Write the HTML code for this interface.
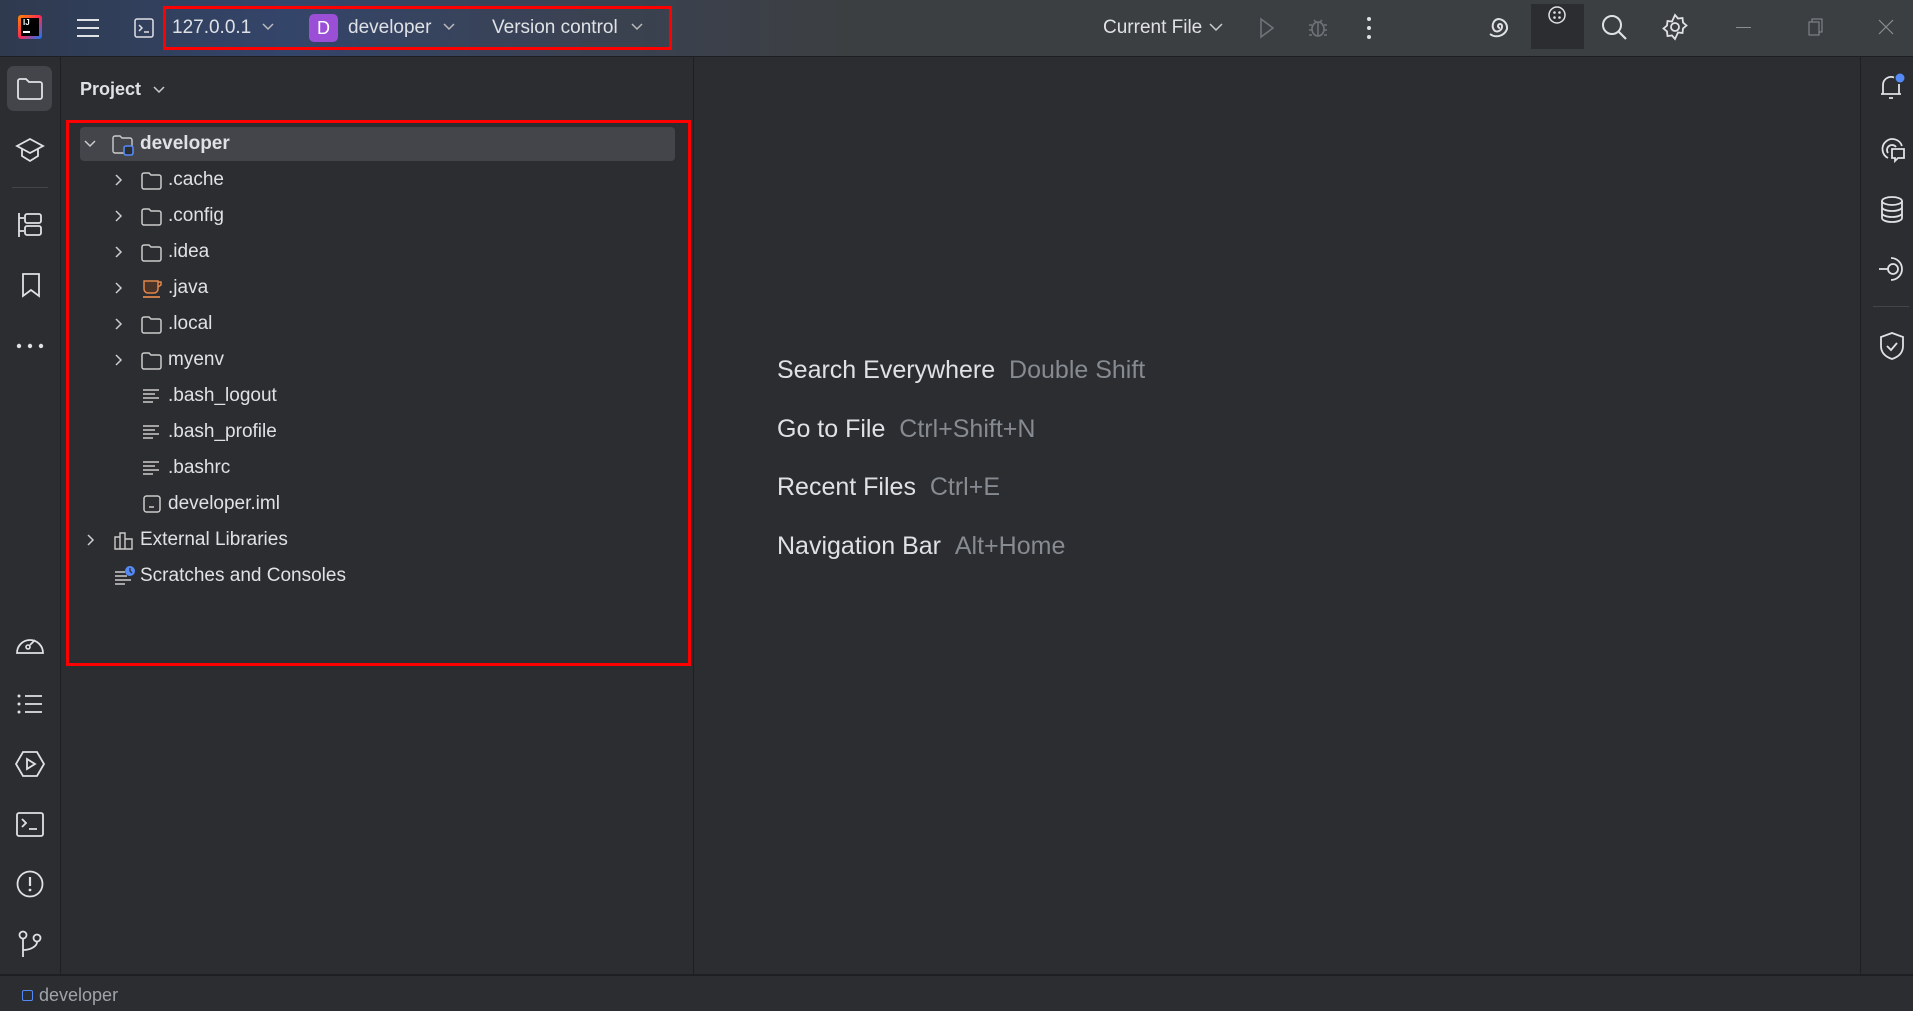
<!DOCTYPE html>
<html><head><meta charset="utf-8"><style>
*{margin:0;padding:0;box-sizing:border-box}
body{width:1913px;height:1011px;background:#2b2d30;font-family:"Liberation Sans",sans-serif;color:#dfe1e5;position:relative;overflow:hidden}
.a{position:absolute}
svg{position:absolute;overflow:visible}
.t{position:absolute;white-space:nowrap}
#title{left:0;top:0;width:1913px;height:57px;background:linear-gradient(90deg,#2f3a4f 0%,#34456a 15%,#3a4253 30%,#3c3f41 45%,#3c3f41 100%);border-bottom:1px solid #1e1f22}
.row{position:absolute;height:36px;line-height:36px;font-size:19px;color:#dfe1e5;white-space:nowrap}
.hint{color:#868a91}
</style></head><body>
<div id="title" class="a"></div>
<div class="a" style="left:18px;top:15px;width:24px;height:24px;background:linear-gradient(135deg,#ff8a00,#fe2857 50%,#087cfa);border-radius:3px"></div>
<div class="a" style="left:21px;top:18px;width:18px;height:18px;background:#000"></div>
<div class="t" style="left:23px;top:18px;font-size:8px;color:#fff;font-weight:bold">IJ</div>
<div class="a" style="left:23px;top:31px;width:7px;height:1.5px;background:#fff"></div>
<svg style="left:76px;top:17px" width="24" height="22"><path d="M1 3H23M1 11H23M1 19H23" stroke="#dfe1e5" stroke-width="2"/></svg>
<svg style="left:134px;top:18px" width="20" height="20"><rect x="1" y="1" width="18" height="18" rx="2" fill="none" stroke="#dfe1e5" stroke-width="1.5"/><path d="M5 7l3 3-3 3M10 14h5" stroke="#dfe1e5" stroke-width="1.5" fill="none"/></svg>
<div class="t" style="left:172px;top:17px;font-size:19px">127.0.0.1</div>
<svg style="left:262px;top:23px" width="12" height="8"><path d="M1 1l5 5 5-5" stroke="#bbb" stroke-width="1.5" fill="none"/></svg>
<div class="a" style="left:309px;top:14px;width:29px;height:28px;background:#9b4fd6;border-radius:5px;color:#fff;font-size:18px;text-align:center;line-height:28px">D</div>
<div class="t" style="left:348px;top:17px;font-size:19px">developer</div>
<svg style="left:443px;top:23px" width="12" height="8"><path d="M1 1l5 5 5-5" stroke="#bbb" stroke-width="1.5" fill="none"/></svg>
<div class="t" style="left:492px;top:17px;font-size:19px">Version control</div>
<svg style="left:631px;top:23px" width="12" height="8"><path d="M1 1l5 5 5-5" stroke="#bbb" stroke-width="1.5" fill="none"/></svg>
<div class="a" style="left:163px;top:6px;width:509px;height:44px;border:3px solid #f00"></div>

<div class="t" style="left:1103px;top:17px;font-size:19px">Current File</div>
<svg style="left:1209px;top:23px" width="14" height="8"><path d="M1 1l6 6 6-6" stroke="#ccc" stroke-width="1.5" fill="none"/></svg>
<svg style="left:1259px;top:17px" width="16" height="22"><path d="M2 2L14 11 2 20Z" stroke="#6f737a" stroke-width="1.6" fill="none"/></svg>
<svg style="left:1307px;top:15px" width="22" height="24"><ellipse cx="11" cy="14" rx="6" ry="7" stroke="#6f737a" stroke-width="1.6" fill="none"/><path d="M11 7v14M2 10h3M17 10h3M2 15h3M17 15h3M2 20h3M17 20h3M7 5l2 2M15 5l-2 2" stroke="#6f737a" stroke-width="1.5"/></svg>
<svg style="left:1366px;top:16px" width="6" height="24"><circle cx="3" cy="3" r="2" fill="#dfe1e5"/><circle cx="3" cy="12" r="2" fill="#dfe1e5"/><circle cx="3" cy="21" r="2" fill="#dfe1e5"/></svg>
<svg style="left:1487px;top:15px" width="26" height="26"><path d="M13 13a2 2 0 1 1 2-2a5 5 0 0 1-7 5a7 7 0 0 1 3-12a9 9 0 0 1 9 10a11 11 0 0 1-17 5" stroke="#dfe1e5" stroke-width="2" fill="none"/></svg>
<div class="a" style="left:1531px;top:4px;width:53px;height:45px;background:#2b2d30"></div>
<svg style="left:1545px;top:6px" width="24" height="24"><circle cx="12" cy="9" r="8" stroke="#dfe1e5" stroke-width="1.5" fill="none"/><circle cx="9.5" cy="6.5" r="1.3" fill="#dfe1e5"/><circle cx="14.5" cy="6.5" r="1.3" fill="#dfe1e5"/><circle cx="9.5" cy="11.5" r="1.3" fill="#dfe1e5"/><circle cx="14.5" cy="11.5" r="1.3" fill="#dfe1e5"/></svg>
<svg style="left:1601px;top:14px" width="28" height="28"><circle cx="11" cy="11" r="9" stroke="#dfe1e5" stroke-width="2" fill="none"/><path d="M17.5 17.5L25 25" stroke="#dfe1e5" stroke-width="2.2"/></svg>
<svg style="left:1662px;top:14px" width="26" height="26"><path d="M13 1l3 3.5 4.5-.5.5 4.5 3.5 3-3.5 3-.5 4.5-4.5-.5L13 25l-3-3.5-4.5.5-.5-4.5L1.5 14.5 5 11.5l.5-4.5 4.5.5Z" stroke="#dfe1e5" stroke-width="1.8" fill="none"/><circle cx="13" cy="13" r="4" stroke="#dfe1e5" stroke-width="1.8" fill="none"/></svg>
<div class="a" style="left:1736px;top:27px;width:15px;height:1px;background:#8a8d92"></div>
<svg style="left:1808px;top:18px" width="16" height="18"><rect x="1" y="4" width="10" height="13" stroke="#8a8d92" fill="none"/><path d="M4 4V1h10v13h-3" stroke="#8a8d92" fill="none"/></svg>
<svg style="left:1878px;top:19px" width="16" height="16"><path d="M1 1l14 14M15 1L1 15" stroke="#8a8d92" stroke-width="1.2"/></svg>

<div class="a" style="left:60px;top:57px;width:1px;height:917px;background:#1e1f22"></div>
<div class="a" style="left:7px;top:66px;width:45px;height:45px;background:#43454a;border-radius:7px"></div>
<svg style="left:17px;top:78px" width="26" height="22"><path d="M1 3a2 2 0 0 1 2-2h6l3 3h11a2 2 0 0 1 2 2v13a2 2 0 0 1-2 2H3a2 2 0 0 1-2-2Z" stroke="#dfe1e5" stroke-width="1.8" fill="none"/></svg>
<svg style="left:15px;top:137px" width="30" height="26"><path d="M15 2L28 9 15 16 2 9Z M7 12v7l8 5 8-5v-7" stroke="#dfe1e5" stroke-width="1.8" fill="none"/></svg>
<div class="a" style="left:12px;top:187px;width:36px;height:1px;background:#43454a"></div>
<svg style="left:17px;top:212px" width="26" height="26"><path d="M2 1v24M2 6h5M2 19h5" stroke="#dfe1e5" stroke-width="1.8"/><rect x="8" y="2" width="16" height="9" rx="2" stroke="#dfe1e5" stroke-width="1.8" fill="none"/><rect x="8" y="14" width="16" height="9" rx="2" stroke="#dfe1e5" stroke-width="1.8" fill="none"/></svg>
<svg style="left:21px;top:272px" width="20" height="26"><path d="M2 2h16v22l-8-6-8 6Z" stroke="#dfe1e5" stroke-width="1.8" fill="none"/></svg>
<svg style="left:16px;top:343px" width="28" height="6"><circle cx="3" cy="3" r="2.2" fill="#dfe1e5"/><circle cx="14" cy="3" r="2.2" fill="#dfe1e5"/><circle cx="25" cy="3" r="2.2" fill="#dfe1e5"/></svg>
<svg style="left:15px;top:632px" width="30" height="24"><path d="M2 21a13 13 0 1 1 26 0Z" stroke="#dfe1e5" stroke-width="1.8" fill="none"/><circle cx="13" cy="15" r="2" stroke="#dfe1e5" stroke-width="1.6" fill="none"/><path d="M15 13l5-5" stroke="#dfe1e5" stroke-width="1.8"/></svg>
<svg style="left:17px;top:693px" width="26" height="22"><path d="M8 3h17M8 11h17M8 19h17" stroke="#dfe1e5" stroke-width="1.8"/><circle cx="2" cy="3" r="1.5" fill="#dfe1e5"/><circle cx="2" cy="11" r="1.5" fill="#dfe1e5"/><circle cx="2" cy="19" r="1.5" fill="#dfe1e5"/></svg>
<svg style="left:15px;top:751px" width="30" height="26"><path d="M8 1h14l7 12-7 12H8L1 13Z" stroke="#dfe1e5" stroke-width="1.8" fill="none"/><path d="M12 8l8 5-8 5Z" stroke="#dfe1e5" stroke-width="1.8" fill="none"/></svg>
<svg style="left:16px;top:812px" width="28" height="25"><rect x="1" y="1" width="26" height="23" rx="2" stroke="#dfe1e5" stroke-width="1.8" fill="none"/><path d="M6 7l4 4-4 4M13 17h8" stroke="#dfe1e5" stroke-width="1.8" fill="none"/></svg>
<svg style="left:16px;top:870px" width="28" height="28"><circle cx="14" cy="14" r="12.5" stroke="#dfe1e5" stroke-width="1.8" fill="none"/><path d="M14 7v9" stroke="#dfe1e5" stroke-width="2.2"/><circle cx="14" cy="20" r="1.4" fill="#dfe1e5"/></svg>
<svg style="left:17px;top:930px" width="26" height="28"><circle cx="6" cy="5" r="3.5" stroke="#dfe1e5" stroke-width="1.8" fill="none"/><circle cx="20" cy="8" r="3.5" stroke="#dfe1e5" stroke-width="1.8" fill="none"/><path d="M6 9v18M6 20c8 0 14-4 14-8" stroke="#dfe1e5" stroke-width="1.8" fill="none"/></svg>

<div class="a" style="left:693px;top:57px;width:1px;height:917px;background:#1e1f22"></div>
<div class="t" style="left:80px;top:79px;font-size:18px;font-weight:bold">Project</div>
<svg style="left:153px;top:86px" width="12" height="8"><path d="M1 1l5 5 5-5" stroke="#ccc" stroke-width="1.5" fill="none"/></svg>
<div class="a" style="left:80px;top:127px;width:595px;height:34px;background:#43454a;border-radius:4px"></div>
<svg style="left:84px;top:140px" width="12" height="8"><path d="M1 1l5 5 5-5" stroke="#ccc" stroke-width="1.5" fill="none"/></svg>
<svg style="left:112px;top:135px" width="24" height="22"><path d="M1 3a2 2 0 0 1 2-2h5l2 2h8a2 2 0 0 1 2 2v11a2 2 0 0 1-2 2H3a2 2 0 0 1-2-2Z" stroke="#ccc" stroke-width="1.4" fill="none"/><rect x="12" y="11" width="9" height="9" rx="2" fill="#2b2d30" stroke="#548af7" stroke-width="1.6"/></svg>
<div class="row" style="left:140px;top:126px;font-weight:bold">developer</div>

<div class="a" style="left:0;top:162px">
<svg style="left:115px;top:12px" width="8" height="12"><path d="M1 1l5 5-5 5" stroke="#ccc" stroke-width="1.5" fill="none"/></svg>
<svg style="left:141px;top:10px" width="22" height="18"><path d="M1 3a2 2 0 0 1 2-2h5l2 2h8a2 2 0 0 1 2 2v10a2 2 0 0 1-2 2H3a2 2 0 0 1-2-2Z" stroke="#ccc" stroke-width="1.5" fill="none"/></svg>
<div class="row" style="left:168px;top:0">.cache</div>
</div>
<div class="a" style="left:0;top:198px">
<svg style="left:115px;top:12px" width="8" height="12"><path d="M1 1l5 5-5 5" stroke="#ccc" stroke-width="1.5" fill="none"/></svg>
<svg style="left:141px;top:10px" width="22" height="18"><path d="M1 3a2 2 0 0 1 2-2h5l2 2h8a2 2 0 0 1 2 2v10a2 2 0 0 1-2 2H3a2 2 0 0 1-2-2Z" stroke="#ccc" stroke-width="1.5" fill="none"/></svg>
<div class="row" style="left:168px;top:0">.config</div>
</div>
<div class="a" style="left:0;top:234px">
<svg style="left:115px;top:12px" width="8" height="12"><path d="M1 1l5 5-5 5" stroke="#ccc" stroke-width="1.5" fill="none"/></svg>
<svg style="left:141px;top:10px" width="22" height="18"><path d="M1 3a2 2 0 0 1 2-2h5l2 2h8a2 2 0 0 1 2 2v10a2 2 0 0 1-2 2H3a2 2 0 0 1-2-2Z" stroke="#ccc" stroke-width="1.5" fill="none"/></svg>
<div class="row" style="left:168px;top:0">.idea</div>
</div>
<div class="a" style="left:0;top:270px">
<svg style="left:115px;top:12px" width="8" height="12"><path d="M1 1l5 5-5 5" stroke="#ccc" stroke-width="1.5" fill="none"/></svg>
<svg style="left:142px;top:9px" width="22" height="20"><path d="M2 2h14v8a4 4 0 0 1-4 4H6a4 4 0 0 1-4-4Z" fill="#4a3328" stroke="#e0874b" stroke-width="1.5"/><path d="M16 3h3v3l-3 2" stroke="#e0874b" stroke-width="1.5" fill="none"/><path d="M1 18h17" stroke="#e0874b" stroke-width="1.8"/></svg>
<div class="row" style="left:168px;top:0">.java</div>
</div>
<div class="a" style="left:0;top:306px">
<svg style="left:115px;top:12px" width="8" height="12"><path d="M1 1l5 5-5 5" stroke="#ccc" stroke-width="1.5" fill="none"/></svg>
<svg style="left:141px;top:10px" width="22" height="18"><path d="M1 3a2 2 0 0 1 2-2h5l2 2h8a2 2 0 0 1 2 2v10a2 2 0 0 1-2 2H3a2 2 0 0 1-2-2Z" stroke="#ccc" stroke-width="1.5" fill="none"/></svg>
<div class="row" style="left:168px;top:0">.local</div>
</div>
<div class="a" style="left:0;top:342px">
<svg style="left:115px;top:12px" width="8" height="12"><path d="M1 1l5 5-5 5" stroke="#ccc" stroke-width="1.5" fill="none"/></svg>
<svg style="left:141px;top:10px" width="22" height="18"><path d="M1 3a2 2 0 0 1 2-2h5l2 2h8a2 2 0 0 1 2 2v10a2 2 0 0 1-2 2H3a2 2 0 0 1-2-2Z" stroke="#ccc" stroke-width="1.5" fill="none"/></svg>
<div class="row" style="left:168px;top:0">myenv</div>
</div>
<div class="a" style="left:0;top:378px">
<svg style="left:142px;top:11px" width="20" height="16"><path d="M1 1h16M1 5h12M1 9h16M1 13h10" stroke="#ccc" stroke-width="1.5"/></svg>
<div class="row" style="left:168px;top:0">.bash_logout</div>
</div>
<div class="a" style="left:0;top:414px">
<svg style="left:142px;top:11px" width="20" height="16"><path d="M1 1h16M1 5h12M1 9h16M1 13h10" stroke="#ccc" stroke-width="1.5"/></svg>
<div class="row" style="left:168px;top:0">.bash_profile</div>
</div>
<div class="a" style="left:0;top:450px">
<svg style="left:142px;top:11px" width="20" height="16"><path d="M1 1h16M1 5h12M1 9h16M1 13h10" stroke="#ccc" stroke-width="1.5"/></svg>
<div class="row" style="left:168px;top:0">.bashrc</div>
</div>
<div class="a" style="left:0;top:486px">
<svg style="left:143px;top:9px" width="18" height="18"><rect x="1" y="1" width="16" height="16" rx="2.5" stroke="#ccc" stroke-width="1.5" fill="none"/><path d="M6 12h5" stroke="#ccc" stroke-width="1.5"/></svg>
<div class="row" style="left:168px;top:0">developer.iml</div>
</div>
<div class="a" style="left:0;top:522px">
<svg style="left:87px;top:12px" width="8" height="12"><path d="M1 1l5 5-5 5" stroke="#ccc" stroke-width="1.5" fill="none"/></svg>
<svg style="left:114px;top:9px" width="20" height="19"><path d="M1 6h5v12H1ZM6 2h5v16H6ZM11 8h7v10h-7Z" stroke="#ccc" stroke-width="1.4" fill="none"/></svg>
<div class="row" style="left:140px;top:0">External Libraries</div>
</div>
<div class="a" style="left:0;top:558px">
<svg style="left:114px;top:8px" width="22" height="20"><path d="M1 6h10M1 10h12M1 14h16M1 18h10" stroke="#ccc" stroke-width="1.5"/><circle cx="16" cy="5" r="5" fill="#548af7"/><path d="M16 2v3l2 2" stroke="#2b2d30" stroke-width="1.3" fill="none"/></svg>
<div class="row" style="left:140px;top:0">Scratches and Consoles</div>
</div>
<div class="a" style="left:66px;top:120px;width:625px;height:546px;border:3px solid #f00"></div>

<div class="t" style="left:777px;top:356px;font-size:25px">Search Everywhere <span class="hint">&nbsp;Double Shift</span></div>
<div class="t" style="left:777px;top:415px;font-size:25px">Go to File <span class="hint">&nbsp;Ctrl+Shift+N</span></div>
<div class="t" style="left:777px;top:473px;font-size:25px">Recent Files <span class="hint">&nbsp;Ctrl+E</span></div>
<div class="t" style="left:777px;top:532px;font-size:25px">Navigation Bar <span class="hint">&nbsp;Alt+Home</span></div>

<div class="a" style="left:1860px;top:57px;width:1px;height:917px;background:#1e1f22"></div>
<svg style="left:1879px;top:73px" width="28" height="30"><path d="M4 21V12a8 8 0 0 1 11-7.5M20 11v10M2 21h20M10 25h4" stroke="#dfe1e5" stroke-width="1.8" fill="none"/><circle cx="21" cy="5" r="4.5" fill="#548af7"/></svg>
<svg style="left:1878px;top:136px" width="28" height="28"><path d="M10 22a10 10 0 1 1 14-12M10 17a5 5 0 1 1 8-6" stroke="#dfe1e5" stroke-width="1.8" fill="none"/><path d="M14 13h12v9h-6l-3 3v-3h-3Z" stroke="#dfe1e5" stroke-width="1.8" fill="#2b2d30"/></svg>
<svg style="left:1880px;top:196px" width="24" height="28"><ellipse cx="12" cy="5" rx="10" ry="4" stroke="#dfe1e5" stroke-width="1.8" fill="none"/><path d="M2 5v17c0 2 4 4 10 4s10-2 10-4V5M2 11c0 2 4 4 10 4s10-2 10-4M2 17c0 2 4 4 10 4s10-2 10-4" stroke="#dfe1e5" stroke-width="1.8" fill="none"/></svg>
<svg style="left:1878px;top:255px" width="28" height="28"><path d="M13 3a11 11 0 1 1 0 22" stroke="#dfe1e5" stroke-width="1.8" fill="none"/><circle cx="15" cy="14" r="5" stroke="#dfe1e5" stroke-width="1.8" fill="none"/><path d="M1 14h9" stroke="#dfe1e5" stroke-width="1.8"/></svg>
<div class="a" style="left:1873px;top:306px;width:36px;height:1px;background:#43454a"></div>
<svg style="left:1879px;top:331px" width="26" height="30"><path d="M13 2l11 4v9c0 7-5 11-11 13C7 26 2 22 2 15V6Z" stroke="#dfe1e5" stroke-width="1.8" fill="none"/><path d="M8 15l4 4 6-7" stroke="#dfe1e5" stroke-width="1.8" fill="none"/></svg>

<div class="a" style="left:0;top:974px;width:1913px;height:37px;background:#2b2d30;border-top:2px solid #1e1f22"></div>
<div class="a" style="left:22px;top:990px;width:11px;height:11px;border:1.6px solid #548af7;border-radius:2px"></div>
<div class="t" style="left:39px;top:985px;font-size:18px;color:#a0a4ab">developer</div>
</body></html>
